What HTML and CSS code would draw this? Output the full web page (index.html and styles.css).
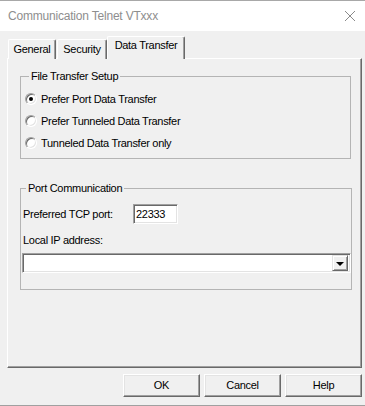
FILE: index.html
```html
<!DOCTYPE html>
<html>
<head>
<meta charset="utf-8">
<link rel="stylesheet" href="styles.css">
</head>
<body>
<div class="window">
  <div class="titlebar">
    <span class="title">Communication Telnet VTxxx</span>
    <svg class="close" width="12" height="12" viewBox="0 0 12 12"><path d="M1 1L11 11M11 1L1 11" stroke="#8a8a8a" stroke-width="1" fill="none"/></svg>
  </div>
  <div class="content">
    <div class="tabs">
      <div class="tab tab-general">General</div>
      <div class="tab tab-security">Security</div>
      <div class="tab tab-data selected">Data Transfer</div>
    </div>
    <div class="panel">
      <fieldset class="group group-file">
        <legend>File Transfer Setup</legend>
        <div class="radio-row"><span class="radio checked"></span><span class="label">Prefer Port Data Transfer</span></div>
        <div class="radio-row"><span class="radio"></span><span class="label">Prefer Tunneled Data Transfer</span></div>
        <div class="radio-row"><span class="radio"></span><span class="label">Tunneled Data Transfer only</span></div>
      </fieldset>
      <fieldset class="group group-port">
        <legend>Port Communication</legend>
        <div class="port-row">
          <span class="label port-label">Preferred TCP port:</span>
          <div class="edit">22333</div>
        </div>
        <div class="label ip-label">Local IP address:</div>
        <div class="combo">
          <div class="combo-btn"><span class="arrow"></span></div>
        </div>
      </fieldset>
    </div>
    <div class="buttons">
      <div class="btn">OK</div>
      <div class="btn">Cancel</div>
      <div class="btn">Help</div>
    </div>
  </div>
</div>
</body>
</html>
```
FILE: styles.css
```css
html, body {
  margin: 0;
  padding: 0;
}
body {
  width: 365px;
  height: 406px;
  overflow: hidden;
  background: #f0f0f0;
  font-family: "Liberation Sans", Arial, sans-serif;
  font-size: 11px;
  letter-spacing: -0.3px;
  color: #000;
}
.window {
  box-sizing: border-box;
  height: 406px;
  border-top: 1px solid #a8a8a8;
  border-bottom: 1px solid #a0a0a0;
  display: flex;
  flex-direction: column;
}
.titlebar {
  height: 30px;
  background: #fff;
  display: flex;
  align-items: center;
  justify-content: space-between;
  padding: 0 9px 0 8px;
}
.title {
  font-size: 12px;
  letter-spacing: -0.2px;
  color: #8e8e8e;
  padding-bottom: 1px;
}
.close {
  display: block;
  margin-bottom: 1px;
}
.content {
  flex: 1;
  padding: 6px 3px 0 7px;
  display: flex;
  flex-direction: column;
}
.tabs {
  display: flex;
  align-items: flex-end;
  height: 22px;
  padding-left: 1px;
  position: relative;
  z-index: 2;
  margin-bottom: -1px;
}
.tab {
  box-sizing: border-box;
  height: 20px;
  line-height: 13px;
  padding-top: 3px;
  text-align: center;
  background: #f0f0f0;
  border-top: 1px solid #fff;
  border-left: 1px solid #fff;
  border-right: 1px solid #696969;
  box-shadow: inset -1px 0 0 #a0a0a0;
  border-radius: 2px 2px 0 0;
}
.tab-general { width: 48px; }
.tab-security { width: 50px; margin-left: 1px; }
.tab.selected {
  width: 78px;
  height: 23px;
  padding-top: 2px;
}
.panel {
  box-sizing: border-box;
  width: 355px;
  height: 310px;
  border-top: 1px solid #fff;
  border-left: 1px solid #fff;
  border-right: 1px solid #696969;
  border-bottom: 1px solid #696969;
  box-shadow: inset -1px -1px 0 #a0a0a0;
  padding: 11px 0 0 12px;
}
.group {
  box-sizing: border-box;
  width: 331px;
  margin: 0;
  border: 1px solid #b4b4b4;
  border-radius: 0;
}
.group legend {
  padding: 0 2px;
  margin-left: 4px;
  line-height: 13px;
}
.group-file {
  padding: 5px 0 4px 4px;
}
.radio-row {
  height: 22px;
  display: flex;
  align-items: center;
}
.radio {
  box-sizing: border-box;
  width: 12px;
  height: 12px;
  border-radius: 50%;
  background: #fff;
  border: 1px solid;
  border-color: #a0a0a0 #fff #fff #a0a0a0;
  box-shadow: inset 1px 1px 0 #696969, inset -1px -1px 0 #e3e3e3;
  margin-right: 4px;
  display: flex;
  align-items: center;
  justify-content: center;
  flex-shrink: 0;
}
.radio.checked::after {
  content: "";
  width: 4px;
  height: 4px;
  border-radius: 50%;
  background: #000;
}
.group-port {
  margin-top: 23px;
  padding: 9px 0 16px 1px;
}
.port-row {
  display: flex;
  align-items: center;
  height: 20px;
}
.port-label {
  margin-left: 1px;
  width: 110px;
}
.edit, .combo {
  box-sizing: border-box;
  background: #fff;
  border: 1px solid;
  border-color: #a0a0a0 #fff #fff #a0a0a0;
  box-shadow: inset 1px 1px 0 #696969, inset -1px -1px 0 #e3e3e3;
}
.edit {
  width: 45px;
  height: 20px;
  line-height: 18px;
  padding-left: 2px;
}
.ip-label {
  margin-top: 10px;
  margin-left: 1px;
  line-height: 13px;
}
.combo {
  margin-top: 6px;
  width: 329px;
  height: 20px;
  display: flex;
  justify-content: flex-end;
  align-items: center;
  padding-right: 2px;
}
.combo-btn {
  box-sizing: border-box;
  width: 16px;
  height: 16px;
  background: #f0f0f0;
  border: 1px solid;
  border-color: #e3e3e3 #696969 #696969 #e3e3e3;
  box-shadow: inset 1px 1px 0 #fff, inset -1px -1px 0 #a0a0a0;
  display: flex;
  align-items: center;
  justify-content: center;
}
.arrow {
  width: 0;
  height: 0;
  border-left: 4px solid transparent;
  border-right: 4px solid transparent;
  border-top: 4px solid #000;
  margin-top: 1px;
}
.buttons {
  display: flex;
  justify-content: flex-end;
  gap: 4px;
  margin-top: 6px;
}
.btn {
  box-sizing: border-box;
  width: 77px;
  height: 23px;
  line-height: 21px;
  text-align: center;
  background: #f0f0f0;
  border: 1px solid;
  border-color: #fff #696969 #696969 #fff;
  box-shadow: inset -1px -1px 0 #a0a0a0, inset 1px 1px 0 #e3e3e3;
}
```
